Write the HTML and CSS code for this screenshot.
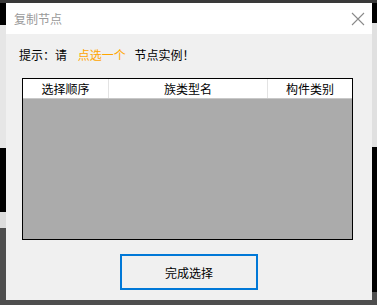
FILE: index.html
```html
<!DOCTYPE html>
<html lang="zh">
<head>
<meta charset="utf-8">
<title>复制节点</title>
<link rel="stylesheet" href="styles.css">
</head>
<body>
<div class="window">
  <div class="titlebar">
    <span class="title">复制节点</span>
    <svg class="close" width="14" height="14" viewBox="0 0 14 14"><path d="M1 1 L13 13 M13 1 L1 13" stroke="#8a8a8a" stroke-width="1.1" fill="none"/></svg>
  </div>
  <div class="content">
    <div class="hint">提示：请 <span class="accent">点选一个</span> 节点实例！</div>
    <div class="table">
      <div class="thead">
        <div class="th c1">选择顺序</div>
        <div class="th c2">族类型名</div>
        <div class="th c3">构件类别</div>
      </div>
      <div class="tbody"></div>
    </div>
    <div class="actions">
      <button class="btn">完成选择</button>
    </div>
  </div>
</div>
</body>
</html>
```
FILE: styles.css
```css
html, body {
  margin: 0;
  padding: 0;
}
body {
  width: 377px;
  height: 305px;
  overflow: hidden;
  font-family: "Noto Sans CJK SC", "Liberation Sans", sans-serif;
  background-color: #4e4e4e;
  background-image:
    linear-gradient(#3a3a3a, #3a3a3a),
    linear-gradient(to bottom, #000 0 22px, #e6e6e6 22px 145px, #000 145px 209px, #dcdcdc 209px 225px, #4e4e4e 225px),
    linear-gradient(to bottom, #000 0 20px, #e0e0e0 20px 144px, #000 144px 289px, #4e4e4e 289px);
  background-repeat: no-repeat;
  background-size: 100% 3px, 6px 302px, 5px 302px;
  background-position: 0 0, 0 3px, 372px 3px;
}
.window {
  margin: 3px 0 0 6px;
  width: 366px;
  height: 297px;
  display: flex;
  flex-direction: column;
  background: #f0f0f0;
}
.titlebar {
  height: 31px;
  background: #fff;
  display: flex;
  align-items: center;
  justify-content: space-between;
  padding: 0 7px 0 8px;
  flex: none;
}
.title {
  font-size: 12px;
  color: #9a9a9a;
}
.close {
  display: block;
}
.content {
  flex: 1;
  display: flex;
  flex-direction: column;
  padding: 0 19px 0 16px;
}
.hint {
  margin-top: 13px;
  margin-left: -3px;
  font-size: 12px;
  line-height: 16px;
  height: 16px;
  color: #000;
  white-space: pre;
}
.accent {
  color: #ffa500;
  margin: 0 6px 0 8px;
}
.table {
  margin-top: 15px;
  height: 162px;
  border: 1px solid #000;
  box-sizing: border-box;
  display: flex;
  flex-direction: column;
  background: #ababab;
}
.thead {
  display: flex;
  height: 20px;
  background: #fff;
  border-bottom: 1px solid #c8c8c8;
  box-sizing: border-box;
}
.th {
  font-size: 12px;
  line-height: 19px;
  text-align: center;
  color: #000;
}
.c1 { width: 85px; border-right: 1px solid #e3e3e3; }
.c2 { width: 158px; border-right: 1px solid #e3e3e3; }
.c3 { flex: 1; }
.tbody {
  flex: 1;
}
.actions {
  display: flex;
  justify-content: center;
  margin-top: 14px;
  padding-left: 3px;
}
.btn {
  width: 138px;
  height: 36px;
  border: 2px solid #0078d7;
  background: #f0f0f0;
  font-family: "Noto Sans CJK SC", "Liberation Sans", sans-serif;
  font-size: 12px;
  color: #000;
  padding: 0;
}
```
